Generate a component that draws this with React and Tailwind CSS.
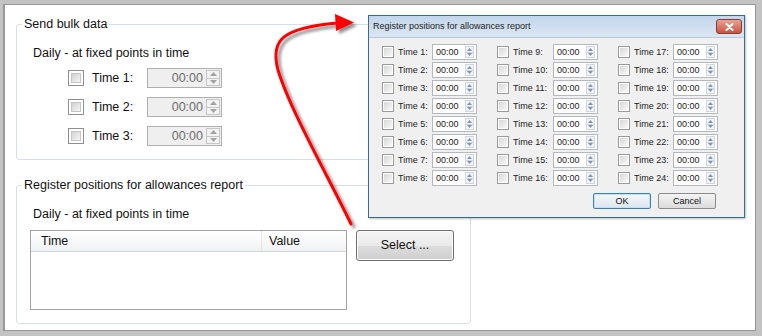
import React from "react";

const Tri = ({ up, color = "#8a8a8a", w = 7, h = 4 }) => (
  <svg width={w} height={h} viewBox={`0 0 ${w} ${h}`} className="block">
    <path d={up ? `M0 ${h} L${w / 2} 0 L${w} ${h}Z` : `M0 0 L${w / 2} ${h} L${w} 0Z`} fill={color} />
  </svg>
);

function BigCheck() {
  return (
    <div className="w-[16px] h-[16px] border border-[#8e8f8f] bg-white p-[2px] shrink-0">
      <div className="w-full h-full border border-[#c4c4c4] bg-gradient-to-br from-[#d2d2d2] to-[#f6f6f6]" />
    </div>
  );
}

function SmallCheck() {
  return (
    <div className="w-[12px] h-[12px] border border-[#9a9a9a] bg-white p-[1px] shrink-0">
      <div className="w-full h-full bg-gradient-to-br from-[#d8d8d8] to-[#f8f8f8]" />
    </div>
  );
}

function BigTimeInput() {
  return (
    <div className="w-[75px] h-[20px] border border-[#afafaf] bg-[#efefef] flex items-stretch">
      <div className="flex-1 flex items-center justify-end pr-[3px] text-[#6d6d6d] leading-none">00:00</div>
      <div className="w-[14px] flex flex-col my-[1px] mr-[1px] gap-0">
        <div className="flex-1 border border-[#c6c6c6] bg-[#f3f3f3] flex items-center justify-center">
          <Tri up color="#a3a3a3" w={7} h={4} />
        </div>
        <div className="flex-1 border border-t-0 border-[#c6c6c6] bg-[#f3f3f3] flex items-center justify-center">
          <Tri color="#a3a3a3" w={7} h={4} />
        </div>
      </div>
    </div>
  );
}

function SmallTimeInput() {
  return (
    <div className="w-[45px] h-[16px] border border-[#b5b8bf] bg-white flex items-stretch">
      <div className="flex-1 flex items-center pl-[3px] text-[9px] text-[#222] leading-none">00:00</div>
      <div className="w-[9px] flex flex-col my-[1px] mr-[2px]">
        <div className="flex-1 border border-[#d0d6de] bg-[#f2f4f7] flex items-center justify-center">
          <Tri up color="#7d93b0" w={5} h={3} />
        </div>
        <div className="flex-1 border border-t-0 border-[#d0d6de] bg-[#f2f4f7] flex items-center justify-center">
          <Tri color="#7d93b0" w={5} h={3} />
        </div>
      </div>
    </div>
  );
}

function DialogColumn({ start, labelW }) {
  const rows = Array.from({ length: 8 }, (_, i) => start + i);
  return (
    <div className="flex flex-col gap-[2px]">
      {rows.map((n) => (
        <div key={n} className="h-[16px] flex items-center">
          <SmallCheck />
          <div className="ml-[4px] text-[9px] text-[#222] leading-none" style={{ width: labelW }}>
            Time {n}:
          </div>
          <SmallTimeInput />
        </div>
      ))}
    </div>
  );
}

export default function App() {
  return (
    <div className="relative w-[762px] h-[336px] bg-[#c3c3c3] pt-[4px] pl-[3px] pr-[6px] pb-[5px] font-['Liberation_Sans',Arial,sans-serif] text-[12.5px] text-[#111]">
      <div className="h-full bg-white border-t border-r border-b border-l-2 border-[#979797] pl-[11px] pt-[12px]">
        {/* Group 1 */}
        <fieldset className="w-[455px] border border-[#d5dfe5] rounded-[3px] pb-[13px]">
          <legend className="ml-[5px] px-[2px] leading-[15px]">Send bulk data</legend>
          <div className="pt-[14px] pl-[16px]">
            <div className="leading-[15px]">Daily - at fixed points in time</div>
            <div className="mt-[7px] pl-[35px] flex flex-col gap-[9px]">
              {[1, 2, 3].map((n) => (
                <div key={n} className="h-[20px] flex items-center">
                  <BigCheck />
                  <div className="ml-[8px] w-[55px] leading-none">Time {n}:</div>
                  <BigTimeInput />
                </div>
              ))}
            </div>
          </div>
        </fieldset>

        {/* Group 2 */}
        <fieldset className="mt-[18px] w-[455px] border border-[#d5dfe5] rounded-[3px] pb-[13px]">
          <legend className="ml-[5px] px-[2px] leading-[15px]">Register positions for allowances report</legend>
          <div className="pt-[14px] pl-[16px]">
            <div className="leading-[15px]">Daily - at fixed points in time</div>
          </div>
          <div className="mt-[8px] pl-[13px] flex items-start">
            <div className="w-[317px] h-[80px] border border-[#a3a3a3] bg-white">
              <div className="h-[21px] flex border-b border-[#d5d5d5] bg-gradient-to-b from-[#ffffff] to-[#f1f2f4]">
                <div className="w-[231px] border-r border-[#e3e3e3] pl-[10px] flex items-center leading-none">Time</div>
                <div className="flex-1 pl-[7px] flex items-center leading-none">Value</div>
              </div>
            </div>
            <button className="ml-[9px] w-[98px] h-[31px] rounded-[3px] border border-[#707070] p-0 bg-[linear-gradient(to_bottom,#f3f3f3_0%,#ebebeb_50%,#dddddd_51%,#cfcfcf_100%)] shadow-[inset_0_0_0_1px_#fcfcfc] flex items-center justify-center leading-none text-[#111]">
              Select ...
            </button>
          </div>
        </fieldset>
      </div>

      {/* Arrow */}
      <svg className="absolute left-0 top-0 pointer-events-none" width="762" height="336" viewBox="0 0 762 336">
        <defs>
          <filter id="sh" x="-20%" y="-20%" width="140%" height="140%">
            <feDropShadow dx="3" dy="3" stdDeviation="1.6" floodColor="#000" floodOpacity="0.45" />
          </filter>
        </defs>
        <g filter="url(#sh)">
          <path d="M351 224 C330 180 290 110 278 70 C270 40 282 28 337 23" fill="none" stroke="#ff0000" strokeWidth="3" strokeLinecap="round" />
          <path d="M335 14 L354 22.5 L336 31 Z" fill="#ff0000" />
        </g>
      </svg>

      {/* Dialog */}
      <div className="absolute left-[368px] top-[15px] w-[377px] h-[203px] border border-[#3a6b8c] bg-[#f0f0f0] flex flex-col shadow-[1px_1px_2px_rgba(0,0,0,0.25)]">
        <div className="h-[22px] shrink-0 flex items-center justify-between pl-[4px] pr-[2px] bg-gradient-to-b from-[#c3d6eb] to-[#dae6f3] border-b border-[#b7c9dd]">
          <span className="text-[9px] text-[#1b1b1b] leading-none">Register positions for allowances report</span>
          <div className="w-[26px] h-[15px] rounded-[3px] border border-[#8b3b30] bg-gradient-to-b from-[#e9a293] to-[#c9513f] flex items-center justify-center">
            <svg width="9" height="8" viewBox="0 0 9 8">
              <path d="M1.5 1 L7.5 7 M7.5 1 L1.5 7" stroke="#ffffff" strokeWidth="2" strokeLinecap="round" />
            </svg>
          </div>
        </div>
        <div className="pt-[6px] pl-[13px] flex gap-[20px]">
          <DialogColumn start={1} labelW={34} />
          <DialogColumn start={9} labelW={40} />
          <DialogColumn start={17} labelW={39} />
        </div>
        <div className="mt-[7px] pr-[28px] flex justify-end gap-[7px]">
          <button className="w-[58px] h-[16px] p-0 rounded-[2px] border border-[#3c7fb1] bg-gradient-to-b from-[#f4f8fb] to-[#dde6ee] shadow-[inset_0_0_0_1px_#bfe3f6] text-[9px] leading-none text-[#111]">
            OK
          </button>
          <button className="w-[58px] h-[16px] p-0 rounded-[2px] border border-[#8c8c8c] bg-gradient-to-b from-[#f4f4f4] to-[#dcdcdc] text-[9px] leading-none text-[#111]">
            Cancel
          </button>
        </div>
      </div>
    </div>
  );
}
